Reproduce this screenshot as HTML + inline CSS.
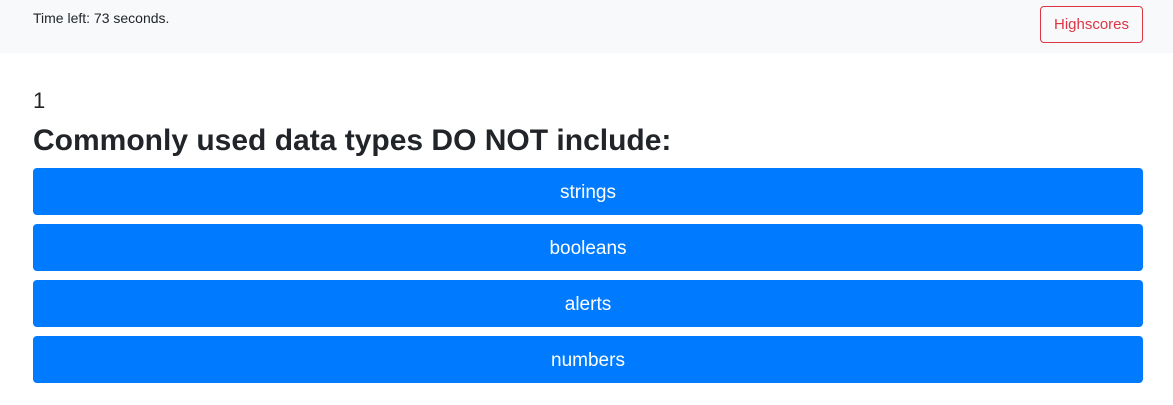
<!DOCTYPE html>
<html><head><style>
body{margin:0;width:1173px;height:405px;background:#fff;font-family:"Liberation Sans",sans-serif;color:#212529;overflow:hidden}
.nav{height:53px;background:#f8f9fa;position:relative}
.time{position:absolute;left:33px;top:10px;font-size:14px}
.hs{position:absolute;left:1040px;top:6px;width:103px;height:37px;border:1px solid #dc3545;border-radius:4px;color:#dc3545;font-size:15px;line-height:35px;text-align:center;box-sizing:border-box}
.num{position:absolute;left:33px;top:88px;font-size:22px}
h1{position:absolute;left:33px;top:124px;margin:0;font-size:30px;font-weight:700}
.b{position:absolute;left:33px;width:1110px;height:47px;background:#007bff;border-radius:4px;color:#fff;font-size:19px;line-height:49px;text-align:center}
</style></head><body>
<div class="nav"><div class="time">Time left: 73 seconds.</div><div class="hs">Highscores</div></div>
<div class="num">1</div>
<h1>Commonly used data types DO NOT include:</h1>
<div class="b" style="top:168px">strings</div>
<div class="b" style="top:224px">booleans</div>
<div class="b" style="top:280px">alerts</div>
<div class="b" style="top:336px">numbers</div>
</body></html>
